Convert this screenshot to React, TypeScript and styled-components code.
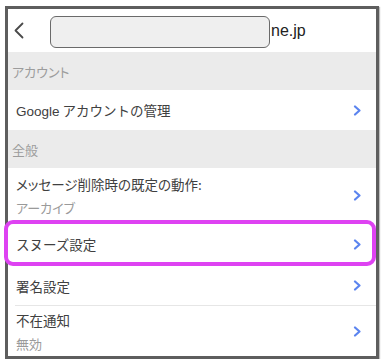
import React from 'react';
import styled, { createGlobalStyle } from 'styled-components';

const GlobalStyle = createGlobalStyle`
  body {
    margin: 0;
    background: #fff;
    font-family: "Noto Sans CJK JP", "Noto Sans", sans-serif;
  }
`;

const Frame = styled.div`
  margin: 6px 0 0 5px;
  width: 368px;
  border: 3px solid #5e5e5e;
  box-shadow: 1px 1px 1px rgba(0, 0, 0, 0.25);
  background: #fff;
`;

const Header = styled.div`
  height: 43px;
  display: flex;
  align-items: center;
  padding-left: 5px;
`;

const BackIcon = styled.svg`
  width: 12px;
  height: 17px;
  margin-right: 25px;
`;

const Masked = styled.div`
  width: 218px;
  height: 30px;
  margin-top: 2px;
  border: 1px solid #6a6a6a;
  border-radius: 6px;
  background: #efefef;
`;

const Domain = styled.span`
  margin-left: 1px;
  font-family: "Liberation Sans", Arial, sans-serif;
  font-size: 16px;
  color: #222;
`;

const Section = styled.div`
  height: 38px;
  display: flex;
  align-items: center;
  padding-left: 4px;
  background: #ebebeb;
  color: #9c9c9c;
  font-size: 13px;
  font-feature-settings: "palt";
`;

const Row = styled.div<{ $h: number; $line?: boolean }>`
  position: relative;
  height: ${(p) => p.$h}px;
  display: flex;
  align-items: center;
  justify-content: space-between;
  padding-right: 14px;
  box-sizing: border-box;
  border-top: ${(p) => (p.$line ? '1px solid #e6e6e6' : 'none')};
  margin-left: ${(p) => (p.$line ? '7px' : '0')};
  padding-left: ${(p) => (p.$line ? '1px' : '8px')};
`;

const Texts = styled.div`
  display: flex;
  flex-direction: column;
  gap: 4px;
  font-feature-settings: "palt";
`;

const Label = styled.span`
  font-size: 13.5px;
  color: #404040;
`;

const Sub = styled.span`
  font-size: 13px;
  color: #9a9a9a;
`;

const Latin = styled.span`
  font-family: "Liberation Sans", Arial, sans-serif;
`;

const Highlight = styled.div`
  position: absolute;
  left: -4px;
  right: 0;
  top: -2px;
  bottom: 0;
  border: 4px solid #de42f2;
  border-radius: 9px;
  pointer-events: none;
`;

const Chevron = () => (
  <svg width="9" height="11" viewBox="0 0 9 11">
    <path d="M2 1.5 L6.5 5.5 L2 9.5" fill="none" stroke="#5b84ef" strokeWidth="2.2" strokeLinecap="round" strokeLinejoin="round" />
  </svg>
);

export default function App() {
  return (
    <>
      <GlobalStyle />
      <Frame>
        <Header>
          <BackIcon viewBox="0 0 12 17">
            <path d="M9.5 1.5 L2.5 8.5 L9.5 15.5" fill="none" stroke="#4a4a4a" strokeWidth="1.8" strokeLinecap="round" strokeLinejoin="round" />
          </BackIcon>
          <Masked />
          <Domain>ne.jp</Domain>
        </Header>
        <Section>アカウント</Section>
        <Row $h={40}>
          <Label><Latin>Google</Latin> アカウントの管理</Label>
          <Chevron />
        </Row>
        <Section>全般</Section>
        <Row $h={54}>
          <Texts>
            <Label>メッセージ削除時の既定の動作:</Label>
            <Sub>アーカイブ</Sub>
          </Texts>
          <Chevron />
        </Row>
        <Row $h={44}>
          <Label>スヌーズ設定</Label>
          <Chevron />
          <Highlight />
        </Row>
        <Row $h={39}>
          <Label>署名設定</Label>
          <Chevron />
        </Row>
        <Row $h={51} $line>
          <Texts>
            <Label>不在通知</Label>
            <Sub>無効</Sub>
          </Texts>
          <Chevron />
        </Row>
      </Frame>
    </>
  );
}
